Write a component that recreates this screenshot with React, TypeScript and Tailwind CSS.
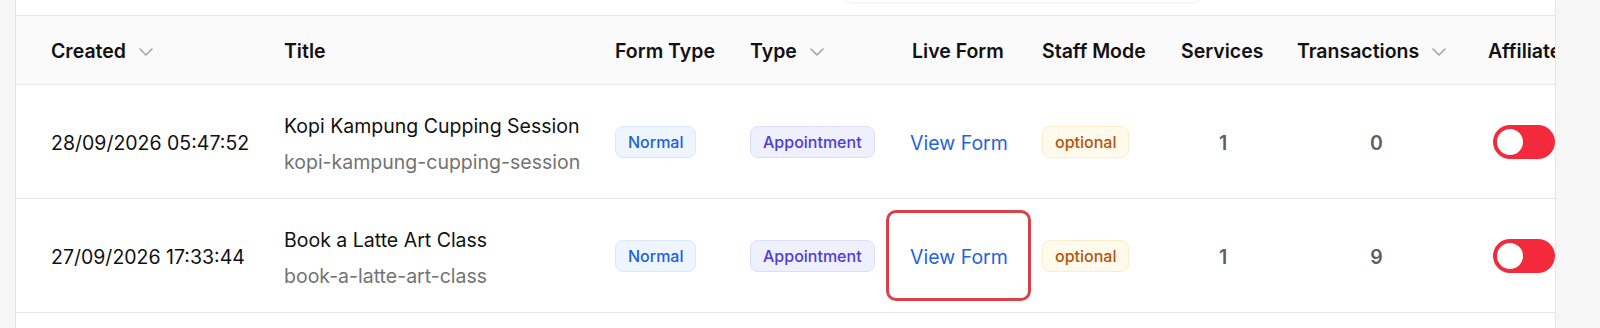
import React from 'react';

const cols = 'grid grid-cols-[252px_331px_135px_162px_130px_139px_116px_191px_200px]';

function Chevron() {
  return (
    <svg width="14" height="8" viewBox="0 0 14 8" fill="none" className="ml-[13px] shrink-0">
      <path d="M1 1L7 7L13 1" stroke="#a3a3a3" strokeWidth="1.5" strokeLinecap="round" strokeLinejoin="round" />
    </svg>
  );
}

function Toggle() {
  return (
    <div className="w-[62px] h-[34px] rounded-full bg-[#f22a3b] flex items-center pl-[2px]">
      <div className="w-[30px] h-[30px] rounded-full bg-white border-[2px] border-[#f22a3b]" />
    </div>
  );
}

const rows = [
  {
    created: '28/09/2026 05:47:52',
    title: 'Kopi Kampung Cupping Session',
    slug: 'kopi-kampung-cupping-session',
    services: 1,
    transactions: 0,
    highlight: false,
  },
  {
    created: '27/09/2026 17:33:44',
    title: 'Book a Latte Art Class',
    slug: 'book-a-latte-art-class',
    services: 1,
    transactions: 9,
    highlight: true,
  },
];

export default function App() {
  return (
    <div className="h-[328px] w-[1600px] overflow-hidden bg-[#f6f6f6] pl-[15px] pr-[44px] font-['Inter',sans-serif] text-[#111111]">
      <div className="relative h-full bg-white border-l border-r border-[#e5e5e5] overflow-hidden">
        {/* search box edge peeking in from above */}
        <div className="absolute left-[828px] top-[-40px] w-[357px] h-[42px] rounded-lg bg-white shadow-[0_1px_3px_rgba(0,0,0,0.08)]" />

        <div className="h-[15px]" />

        {/* Header */}
        <div className={`${cols} h-[70px] items-center bg-[#fafafa] border-t border-b border-[#e5e5e5] text-[19.5px] font-semibold`}>
          <div className="pl-[35px] flex items-center translate-y-[2px]">Created<Chevron /></div>
          <div className="pl-4 translate-y-[2px]">Title</div>
          <div className="pl-4 translate-y-[2px]">Form Type</div>
          <div className="pl-4 flex items-center translate-y-[2px]">Type<Chevron /></div>
          <div className="pl-4 translate-y-[2px]">Live Form</div>
          <div className="pl-4 translate-y-[2px]">Staff Mode</div>
          <div className="pl-4 translate-y-[2px]">Services</div>
          <div className="pl-4 flex items-center translate-y-[2px]">Transactions<Chevron /></div>
          <div className="pl-4 whitespace-nowrap translate-y-[2px]">Affiliate Enabled</div>
        </div>

        {/* Rows */}
        {rows.map((r, idx) => (
          <div key={idx} className={`${cols} h-[114px] items-center border-b border-[#e5e5e5] text-[19.5px]`}>
            <div className="pl-[35px] whitespace-nowrap translate-y-[2px]">{r.created}</div>
            <div className="pl-4 whitespace-nowrap translate-y-[2px]">
              <div className="leading-7">{r.title}</div>
              <div className="leading-7 mt-2 text-[#737373]">{r.slug}</div>
            </div>
            <div className="pl-4">
              <span className="inline-block px-3 py-[3px] rounded-lg border border-[#dbe7fd] bg-[#eff5ff] text-[#1d5fe0] text-[16px] font-medium">
                Normal
              </span>
            </div>
            <div className="pl-4">
              <span className="inline-block px-3 py-[3px] rounded-lg border border-[#dcdffc] bg-[#eef0ff] text-[#4f3bd9] text-[16px] font-medium">
                Appointment
              </span>
            </div>
            <div className="relative pl-[14px] h-full flex items-center">
              <span className="text-[#1f63e0] text-[19.5px] translate-y-[2px]">View Form</span>
              {r.highlight && (
                <div className="absolute left-[-10px] top-[11px] w-[145px] h-[91px] rounded-[10px] border-[3px] border-[#da3f4a]" />
              )}
            </div>
            <div className="pl-4">
              <span className="inline-block px-3 py-[3px] rounded-lg border border-[#fbedc8] bg-[#fffaeb] text-[#b4530b] text-[16px] font-medium">
                optional
              </span>
            </div>
            <div className="text-center font-semibold text-[#5f5f5f] translate-y-[2px]">{r.services}</div>
            <div className="text-center font-semibold text-[#5f5f5f] translate-y-[2px]">{r.transactions}</div>
            <div className="pl-[21px]">
              <Toggle />
            </div>
          </div>
        ))}
      </div>
    </div>
  );
}
